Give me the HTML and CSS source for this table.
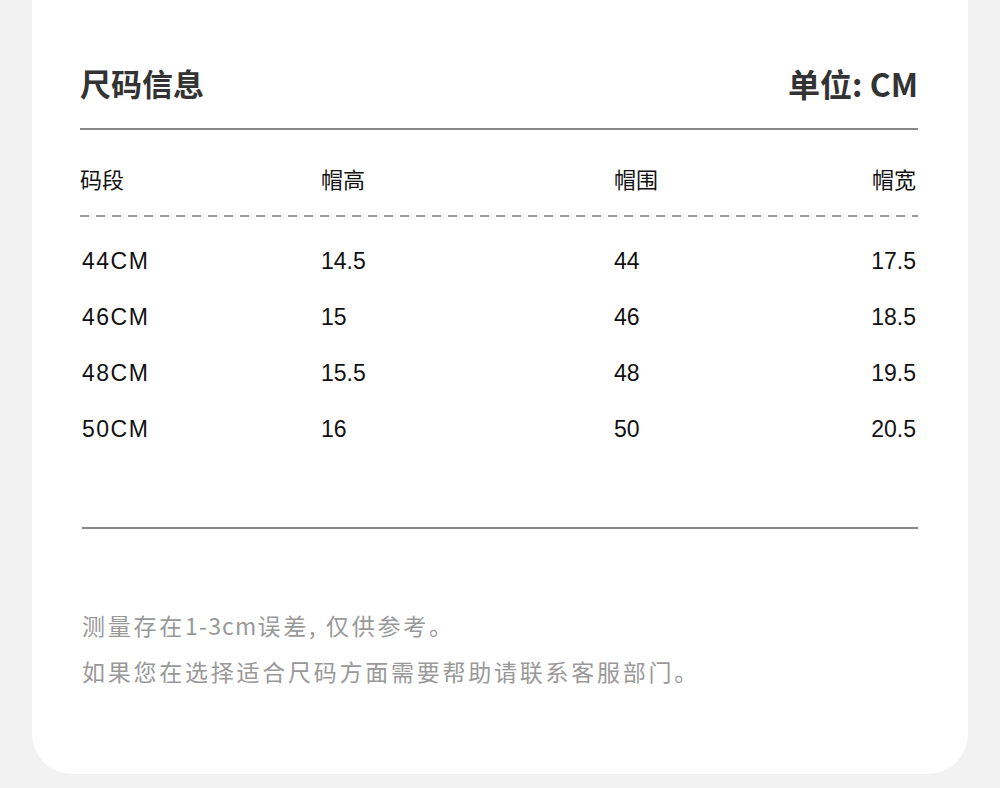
FILE: index.html
```html
<!DOCTYPE html>
<html lang="zh-CN">
<head>
<meta charset="utf-8">
<title>尺码信息</title>
<link rel="stylesheet" href="styles.css">
</head>
<body>
<div class="card">
  <div class="head">
    <h1 class="title">尺码信息</h1>
    <div class="unit">单位: CM</div>
  </div>
  <div class="table">
    <div class="row th">
      <span>码段</span><span>帽高</span><span>帽围</span><span class="r">帽宽</span>
    </div>
    <div class="dash"></div>
    <div class="body">
      <div class="row td"><span class="c1">44CM</span><span>14.5</span><span>44</span><span class="r">17.5</span></div>
      <div class="row td"><span class="c1">46CM</span><span>15</span><span>46</span><span class="r">18.5</span></div>
      <div class="row td"><span class="c1">48CM</span><span>15.5</span><span>48</span><span class="r">19.5</span></div>
      <div class="row td"><span class="c1">50CM</span><span>16</span><span>50</span><span class="r">20.5</span></div>
    </div>
  </div>
  <div class="rule"></div>
  <div class="notes">
    <p>测量存在<span class="num">1-3cm</span>误差, 仅供参考。</p>
    <p>如果您在选择适合尺码方面需要帮助请联系客服部门。</p>
  </div>
</div>
</body>
</html>
```
FILE: styles.css
```css
html, body {
  margin: 0;
  padding: 0;
}
body {
  background: #f2f2f2;
  font-family: "Liberation Sans", "Noto Sans CJK SC", sans-serif;
  color: #111;
}
.card {
  margin: 0 32px;
  background: #fff;
  border-radius: 0 0 40px 40px;
  padding: 63px 50px 80px 48px;
  height: 774px;
  box-sizing: border-box;
}
.head {
  display: flex;
  justify-content: space-between;
  align-items: center;
  padding-bottom: 25px;
  border-bottom: 2px solid #888;
}
.title, .unit {
  margin: 0;
  font-family: "Noto Sans CJK SC", sans-serif;
  font-weight: 700;
  font-size: 31px;
  line-height: 40px;
  color: #333;
}
.unit {
  font-size: 32px;
}
.row {
  display: grid;
  grid-template-columns: 241px 293px 1fr auto;
}
.row .r {
  text-align: right;
  padding-right: 2px;
}
.th {
  margin-top: 33px;
  font-family: "Noto Sans CJK SC", sans-serif;
  font-size: 22px;
  line-height: 30px;
  padding-bottom: 22px;
}
.dash {
  height: 2px;
  background: repeating-linear-gradient(to right, #9a9a9a 0 9px, transparent 9px 16px);
}
.body {
  margin-top: 16px;
}
.td {
  font-size: 23px;
  line-height: 56px;
}
.td .c1 {
  padding-left: 2px;
  letter-spacing: 1.5px;
}
.rule {
  margin-top: 70px;
  margin-left: 2px;
  height: 2px;
  background: #888;
}
.notes {
  margin-top: 73px;
  padding-left: 2px;
  color: #999;
  font-family: "Noto Sans CJK SC", sans-serif;
  font-size: 23px;
  letter-spacing: 2.75px;
  line-height: 46px;
}
.notes p {
  margin: 0;
}
.notes .num {
  letter-spacing: 1.2px;
}
```
